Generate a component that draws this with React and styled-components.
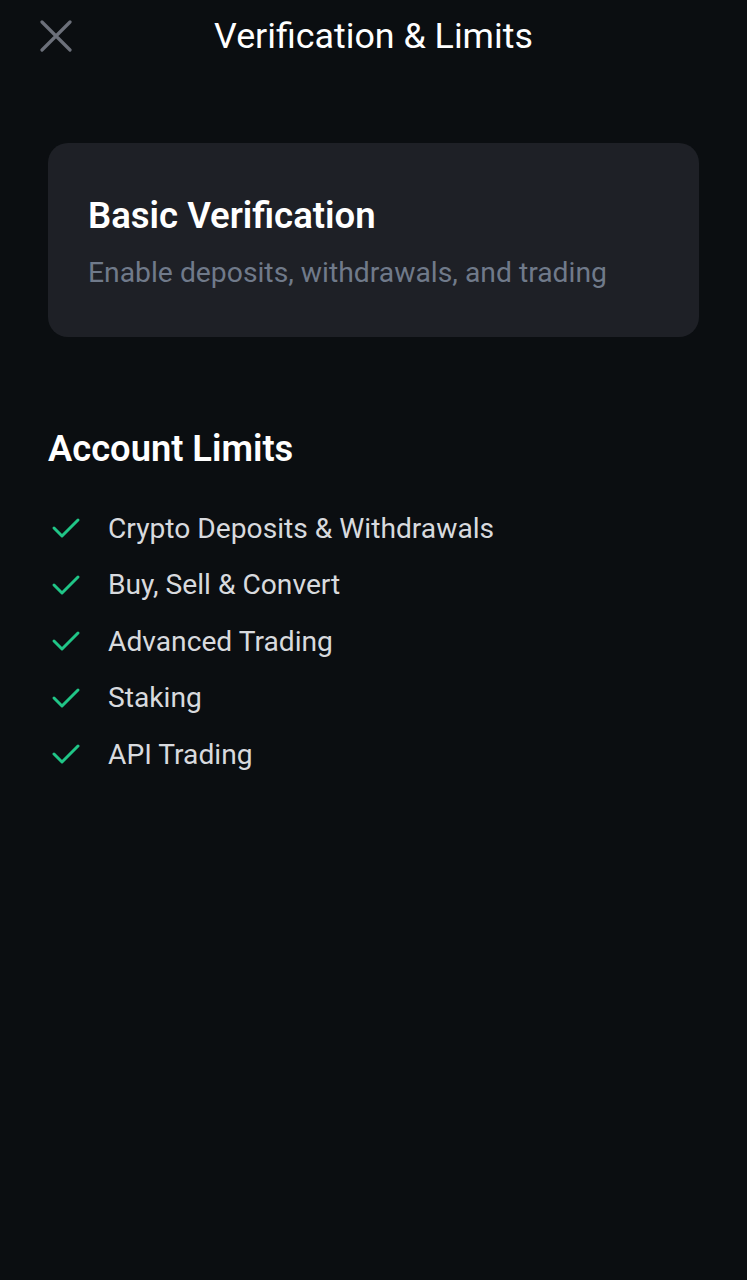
import React from "react";
import styled, { createGlobalStyle } from "styled-components";

const Global = createGlobalStyle`
    html, body {
        margin: 0;
        background: #0b0e11;
    }
    body {
        font-family: Roboto, "Noto Sans", sans-serif;
        -webkit-font-smoothing: antialiased;
    }
`;

const Page = styled.div`
    min-height: 1280px;
    background: #0b0e11;
    box-sizing: border-box;
`;

const Header = styled.header`
    display: grid;
    grid-template-columns: 1fr auto 1fr;
    align-items: center;
    height: 72px;
    padding: 0 40px;
    box-sizing: border-box;
`;

const Close = styled.button`
    justify-self: start;
    width: 32px;
    height: 32px;
    padding: 0;
    border: none;
    background: none;
    display: flex;
    align-items: center;
    justify-content: center;
`;

const Title = styled.h1`
    margin: 0;
    font-size: 35.8px;
    font-weight: 400;
    color: #ffffff;
`;

const Content = styled.main`
    padding: 71px 48px 0;
`;

const Card = styled.section`
    background: #1e2026;
    border-radius: 20px;
    padding: 51px 40px 46px;
`;

const CardTitle = styled.h2`
    margin: 0;
    font-size: 36.5px;
    font-weight: 600;
    color: #ffffff;
    line-height: 44px;
`;

const CardText = styled.p`
    margin: 17px 0 0;
    font-size: 28.3px;
    color: #707a8a;
    line-height: 36px;
`;

const SectionTitle = styled.h2`
    margin: 90px 0 0;
    font-size: 36.3px;
    font-weight: 600;
    color: #ffffff;
    line-height: 44px;
`;

const List = styled.ul`
    list-style: none;
    margin: 29px 0 0;
    padding: 0;
    display: flex;
    flex-direction: column;
`;

const Item = styled.li`
    display: flex;
    align-items: center;
    height: 56.5px;
    font-size: 28.2px;
    color: #d8dade;
`;

const Check = styled.svg`
    width: 32px;
    height: 32px;
    margin-left: 2px;
    margin-right: 26px;
    flex-shrink: 0;
`;

const limits = [
    "Crypto Deposits & Withdrawals",
    "Buy, Sell & Convert",
    "Advanced Trading",
    "Staking",
    "API Trading",
];

export default function App() {
    return (
        <Page>
            <Global />
            <Header>
                <Close aria-label="Close">
                    <svg width="32" height="32" viewBox="0 0 32 32">
                        <path
                            d="M2 2 L30 30 M30 2 L2 30"
                            stroke="#6c707a"
                            strokeWidth="3.2"
                            strokeLinecap="round"
                        />
                    </svg>
                </Close>
                <Title>Verification &amp; Limits</Title>
                <span />
            </Header>
            <Content>
                <Card>
                    <CardTitle>Basic Verification</CardTitle>
                    <CardText>Enable deposits, withdrawals, and trading</CardText>
                </Card>
                <SectionTitle>Account Limits</SectionTitle>
                <List>
                    {limits.map((l) => (
                        <Item key={l}>
                            <Check viewBox="0 0 32 32">
                                <path
                                    d="M4 16 L12 24 L28 8"
                                    fill="none"
                                    stroke="#20c587"
                                    strokeWidth="3"
                                    strokeLinecap="round"
                                    strokeLinejoin="round"
                                />
                            </Check>
                            {l}
                        </Item>
                    ))}
                </List>
            </Content>
        </Page>
    );
}
